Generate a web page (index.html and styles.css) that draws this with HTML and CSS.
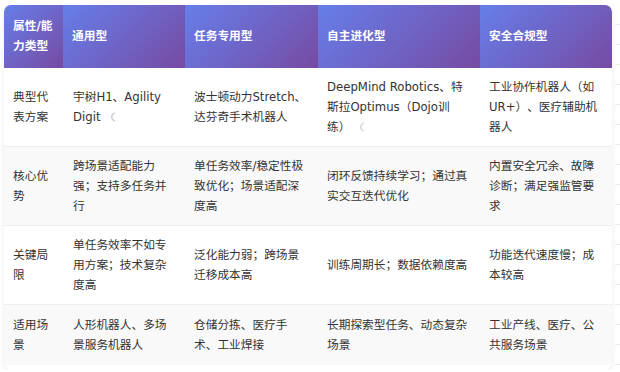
FILE: index.html
```html
<!DOCTYPE html>
<html lang="zh">
<head>
<meta charset="utf-8">
<link rel="stylesheet" href="styles.css">
</head>
<body>
<div class="page">
  <div class="card">
    <table class="cmp">
      <colgroup>
        <col class="c1"><col class="c2"><col class="c3"><col class="c4"><col class="c5">
      </colgroup>
      <thead>
        <tr>
          <th>属性/能力类型</th>
          <th>通用型</th>
          <th>任务专用型</th>
          <th>自主进化型</th>
          <th>安全合规型</th>
        </tr>
      </thead>
      <tbody>
        <tr>
          <td>典型代表方案</td>
          <td>宇树H1、Agility Digit<svg class="spin" width="10" height="10" viewBox="0 0 10 10"><path d="M6.5 1.2 A4 4 0 0 0 6.5 8.8" fill="none" stroke="#cfcfcf" stroke-width="1.4" stroke-linecap="round"/></svg></td>
          <td>波士顿动力Stretch、达芬奇手术机器人</td>
          <td>DeepMind Robotics、特斯拉Optimus（Dojo训练）<svg class="spin" width="10" height="10" viewBox="0 0 10 10"><path d="M6.5 1.2 A4 4 0 0 0 6.5 8.8" fill="none" stroke="#d8d8d8" stroke-width="1.4" stroke-linecap="round"/></svg></td>
          <td>工业协作机器人（如UR+）、医疗辅助机器人</td>
        </tr>
        <tr>
          <td>核心优势</td>
          <td>跨场景适配能力强；支持多任务并行</td>
          <td>单任务效率/稳定性极致优化；场景适配深度高</td>
          <td>闭环反馈持续学习；通过真实交互迭代优化</td>
          <td>内置安全冗余、故障诊断；满足强监管要求</td>
        </tr>
        <tr>
          <td>关键局限</td>
          <td>单任务效率不如专用方案；技术复杂度高</td>
          <td>泛化能力弱；跨场景迁移成本高</td>
          <td>训练周期长；数据依赖度高</td>
          <td>功能迭代速度慢；成本较高</td>
        </tr>
        <tr>
          <td>适用场景</td>
          <td>人形机器人、多场景服务机器人</td>
          <td>仓储分拣、医疗手术、工业焊接</td>
          <td>长期探索型任务、动态复杂场景</td>
          <td>工业产线、医疗、公共服务场景</td>
        </tr>
      </tbody>
    </table>
  </div>
  <div class="strip"></div>
</div>
</body>
</html>
```

FILE: styles.css
```css
html, body {
  margin: 0;
  padding: 0;
  background: #ffffff;
}

body {
  font-family: "DejaVu Sans", "Noto Sans CJK SC", sans-serif;
  font-size: 11.7px;
  color: #333333;
  text-spacing-trim: space-all;
}

.page {
  display: flex;
  gap: 3px;
  padding: 5px 0 0 4px;
}

.card {
  width: 608px;
  border-radius: 7px;
  overflow: hidden;
  box-shadow: 0 2px 6px rgba(0, 0, 0, 0.08);
}

.strip {
  width: 5px;
  height: 364px;
  background: repeating-linear-gradient(to bottom, transparent 0, transparent 19px, #ececec 19px, #ececec 20px);
}

.cmp {
  width: 608px;
  table-layout: fixed;
  border-collapse: collapse;
}

.c1 { width: 59px; }
.c2 { width: 122px; }
.c3 { width: 133px; }
.c4 { width: 162px; }
.c5 { width: 132px; }

.cmp th {
  background: linear-gradient(135deg, #667eea 0%, #764ba2 100%);
  color: #ffffff;
  font-weight: 700;
  text-align: left;
  line-height: 20px;
  padding: 11px 8px 12px 9px;
  vertical-align: middle;
}

.cmp td {
  line-height: 20px;
  padding: 9px 8px 9px 9px;
  vertical-align: middle;
  border-bottom: 1px solid #eeeeee;
  word-break: normal;
}

.cmp tbody tr:nth-child(even) td {
  background: #f9f9f9;
}

.cmp tbody tr:last-child td {
  border-bottom: none;
  padding-top: 10px;
  padding-bottom: 10px;
}

.cmp td:nth-child(2) {
  padding-left: 10px;
}

.spin {
  display: inline-block;
  vertical-align: -1px;
  margin-left: 7px;
}
```
